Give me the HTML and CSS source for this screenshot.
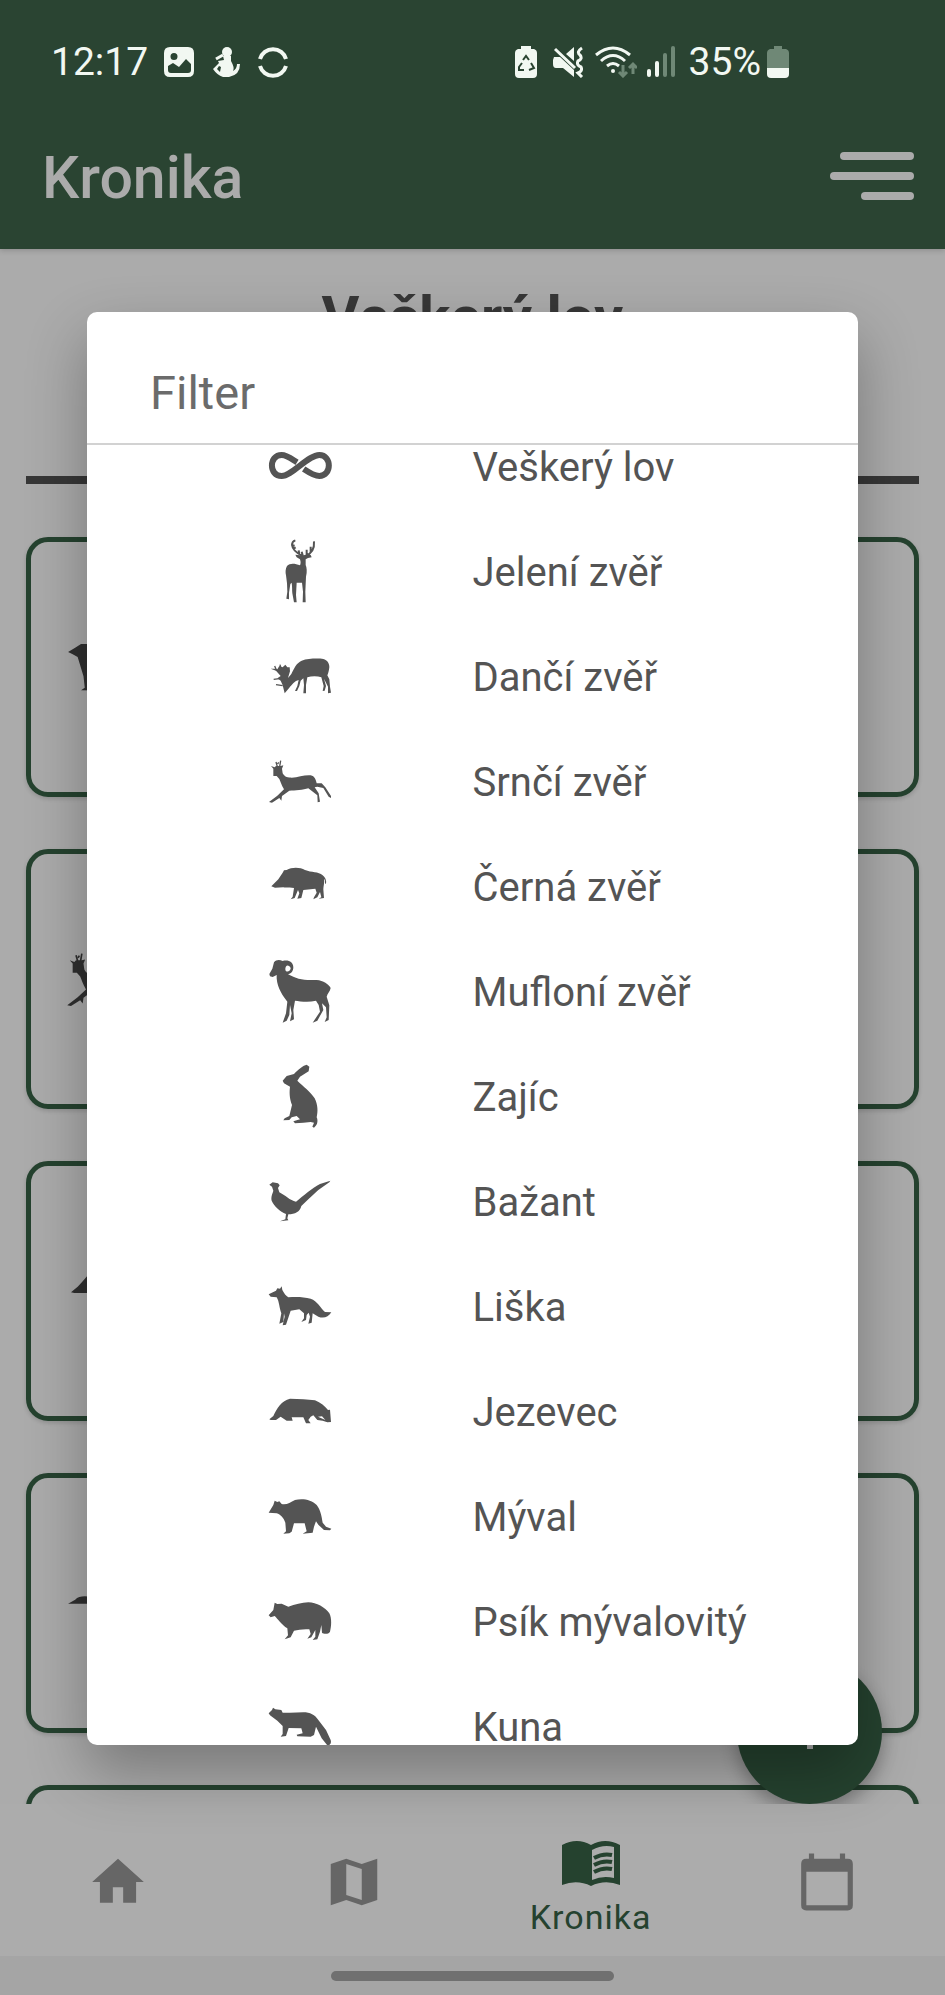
FILE: index.html
```html
<!DOCTYPE html>
<html lang="cs">
<head>
<meta charset="utf-8">
<meta name="viewport" content="width=device-width, initial-scale=1">
<title>Kronika</title>
<link rel="stylesheet" href="styles.css">
</head>
<body>
<svg class="sprite" aria-hidden="true">
  <symbol id="roe" viewBox="84 57 192 192"><path d="M100 116 93 108 104 112 108 108 122 108 130 106 126 116 128 130C134 142 145 143 155 143 175 142 195 134 212 136 224 138 228 150 230 160L245 160 256 172 273 198 273 204 266 200 250 174 232 170 224 172 236 190 240 215 233 217 232 196 205 175C190 180 165 182 148 182L126 198 124 212 118 204 96 218 87 216 112 197 132 178C124 165 122 155 118 147L110 138 100 138 100 130Z"/><path class="line" d="M112 110 108 96M119 110 122 92M113 102 116 97"/></symbol>
  <symbol id="boar" viewBox="84 372 192 192"><path d="M94 469 115 448 128 428 132 421 140 420C155 411 180 411 195 420 215 428 235 424 248 436 256 442 260 452 258 462L255 460C256 452 254 448 252 447 254 458 250 470 250 478L252 504 236 506 244 502 240 486 232 502 220 508 222 502 230 488 226 476 190 480 184 504 172 506 178 490 174 480 164 504 152 508 158 500 162 474C150 470 140 474 130 472L105 473Z"/></symbol>
</svg>
<div class="screen">
  <header class="top">
    <div class="status">
      <div class="status-group">
        <span>12:17</span>
        <svg width="30" height="30" viewBox="0 0 30 30"><path fill-rule="evenodd" d="M6 0H24Q30 0 30 6V24Q30 30 24 30H6Q0 30 0 24V6Q0 0 6 0ZM10 6A3.500 3.500 0 1 0 10 13A3.500 3.500 0 1 0 10 6ZM4 23V19L9 16 15 20 22 12 27 17V23Q27 26 24 26H7Q4 26 4 23Z"/></svg>
        <svg class="gap-wide" width="28" height="30" viewBox="0 0 28 30"><circle cx="15" cy="5" r="5"/><path d="M11 9H19L19 14Q23 21 21 24Q25 22 25 17H28Q28 28 17 30H11Q5 28 1 22L7 16 6 14 12 13ZM7 19 5 22 8 25 9 20Z" fill-rule="evenodd"/><path d="M4 12 11 8" stroke="currentColor" stroke-width="3"/></svg>
        <svg class="gap-wide" width="30" height="32" viewBox="0 0 30 32"><path class="line" d="M2 13A13.500 13.500 0 0 1 28 13M2 20A13.500 13.500 0 0 0 28 20"/></svg>
      </div>
      <div class="status-group">
        <svg width="24" height="32" viewBox="0 0 24 32"><path d="M7 0H17V3H20Q23 4 23 7V28Q23 32 19 32H5Q1 32 1 28V7Q1 4 4 3H7Z"/><path d="M9 14 12 10 15 14M17 17 20 22 15 24M10 24H5L5 21 8 17" fill="none" stroke="#2a4432" stroke-width="2"/></svg>
        <svg class="gap-mid" width="32" height="32" viewBox="0 0 32 32"><path d="M13 8 21 1V15ZM1 11H7L21 24V31L10 22H3Q0 22 0 18V14Z"/><path class="line thin" d="M2 3 22 22M29 2Q23 6 27 9 30 13 25 15 23 19 28 21 30 25 25 27L29 31"/></svg>
        <svg class="gap" width="42" height="32" viewBox="0 0 42 32"><path class="line thin" d="M1 9Q18-5 35 9M6 15Q18 4 30 15M12 20Q18 15 24 20"/><circle cx="18" cy="25" r="2"/><path class="line thin faint-line" d="M28 19V29M24 26 28 30 32 26M38 28V19M34 22 38 18 42 22"/></svg>
        <svg class="gap" width="28" height="32" viewBox="0 0 28 32"><rect y="23" width="4" height="8" rx="2"/><rect x="8" y="15" width="4" height="16" rx="2"/><g class="faint"><rect x="16" y="7" width="4" height="24" rx="2"/><rect x="24" width="4" height="31" rx="2"/></g></svg>
        <span class="percent">35%</span>
        <svg width="22" height="32" viewBox="0 0 22 32"><path class="faint" d="M7 0H15V3H19Q22 4 22 7V22H0V7Q0 4 3 3H7Z"/><path d="M0 22H22V28Q22 32 18 32H4Q0 32 0 28Z"/></svg>
      </div>
    </div>
    <div class="appbar">
      <h1>Kronika</h1>
      <button class="menu" aria-label="Menu"><i class="bar bar-mid"></i><i class="bar"></i><i class="bar bar-short"></i></button>
    </div>
  </header>

  <main class="content">
    <h2>Veškerý lov</h2>
    <hr>
    <div class="cards">
      <article class="card"><svg viewBox="0 0 192 192"><path d="M5 60 22 50 36 41H110V153L36 152 45 146 42 118 34 92 28 72 15 65Z"/></svg></article>
      <article class="card"><svg><use href="#roe"/></svg></article>
      <article class="card"><svg viewBox="0 0 192 192"><path d="M12 99 28 86 38 75 52 59H110V101H20Z"/></svg></article>
      <article class="card"><svg viewBox="0 0 192 192"><path d="M5 98 22 88C30 80 45 78 60 82L110 90V102L60 98Z"/></svg></article>
      <article class="card"></article>
    </div>
    <button class="fab" aria-label="Přidat"><svg width="34" height="34" viewBox="0 0 34 34"><path d="M14 0H20V14H34V20H20V34H14V20H0V14H14Z"/></svg></button>
  </main>

  <nav class="tabs">
    <a href="#" aria-label="Domů"><svg width="62" height="62" viewBox="0 0 24 24"><path d="M10 20V14H14V20H19V12H22L12 3 2 12H5V20Z"/></svg></a>
    <a href="#" aria-label="Mapa"><svg width="62" height="62" viewBox="0 0 24 24"><path fill-rule="evenodd" d="M3 5 9 3 15 5 21 3V19L15 21 9 19 3 21ZM9 5V17L15 19V7Z"/></svg></a>
    <a href="#" class="active"><svg width="58" height="46" viewBox="0 0 58 46"><path fill-rule="evenodd" d="M0 4Q15-4 29 4 43-4 58 4V44Q43 38 29 45 15 38 0 44ZM30 9V39Q41 34 52 37V6Q41 3 30 9Z"/><path class="line" d="M32 17Q41 12 50 14M32 24Q41 19 50 21M32 31Q41 26 50 28"/></svg><span>Kronika</span></a>
    <a href="#" aria-label="Kalendář"><svg width="62" height="62" viewBox="0 0 24 24"><path fill-rule="evenodd" d="M20 3H19V1H17V3H7V1H5V3H4Q2 3 2 5V21Q2 23 4 23H20Q22 23 22 21V5Q22 3 20 3ZM20 21H4V8H20Z"/></svg></a>
  </nav>
  <div class="system"><i></i></div>

  <div class="overlay">
    <section class="dialog" role="dialog" aria-labelledby="filter-title">
      <h2 id="filter-title">Filter</h2>
      <div class="viewport">
        <ul>
          <li><button><svg viewBox="84 12 192 192"><path d="M171 97C155 87 140 75 125 75 86 75 86 138 125 138 155 138 205 75 238 75 276 75 276 138 238 138 222 138 206 127 191 117" fill="none" stroke="currentColor" stroke-width="18"/></svg><span>Veškerý lov</span></button></li>
          <li><button><svg viewBox="84 327 192 192"><path d="M180 388C183 396 182 402 180 406 165 400 150 398 141 408 136 416 136 428 138 436L141 460 142 485 139 506 147 508 147 488 151 462 155 458C157 470 156 480 157 490L162 517H170L168 495 170 458H186L189 485 188 517H197L196 485 198 440C202 425 200 412 197 405V388L204 384 215 382 212 375H198L180 376 166 374 170 382Z"/><path class="line thick" d="M188 378C175 372 158 362 156 345 156 338 160 333 166 331M196 378C212 372 224 358 222 334M178 373 176 361M188 376 185 365M200 374V359M212 366 212 350M159 357 167 352M157 346 164 347"/></svg><span>Jelení zvěř</span></button></li>
          <li><button><svg viewBox="84 642 192 192"><path d="M134 790 128 766 122 752 112 745 122 738 108 722 92 716 108 716 112 718 118 708 128 712 136 704 142 712 149 712 150 724 144 744 154 732C162 715 170 698 185 692 205 685 235 685 250 687 262 690 268 700 268 712 267 722 264 732 262 736L268 748 270 770 273 788 264 790 264 770 252 746 258 768 254 782 248 783 251 768 244 742C232 738 215 738 202 742L198 765V790H190L192 765 190 745 182 752 178 768 171 783H165L172 768 176 750C165 752 155 765 148 773Z"/><path class="line" d="M101 748 118 746M108 764 128 767M104 708 110 722M122 712 120 704"/></svg><span>Dančí zvěř</span></button></li>
          <li><button><svg><use href="#roe"/></svg><span>Srnčí zvěř</span></button></li>
          <li><button><svg><use href="#boar"/></svg><span>Černá zvěř</span></button></li>
          <li><button><svg viewBox="84 687 192 192"><path fill-rule="evenodd" d="M90 739 88 732 97 716 102 697C108 689 118 688 128 693 145 688 160 696 160 712 160 724 152 732 144 733L160 740C180 750 205 750 230 750 250 752 266 762 272 774 270 785 262 790 260 800L268 826 266 870 254 876 260 862 258 832 246 820 250 840 232 872 218 878 240 845 236 825 228 812C205 818 180 814 165 812L160 840 162 868 150 874 155 850 150 825 148 855 140 872 128 878 138 850 142 815C130 800 112 775 110 745V735L98 741ZM145 707C138 705 134 715 137 722 143 728 150 722 152 716 152 711 149 708 145 707Z"/></svg><span>Mufloní zvěř</span></button></li>
          <li><button><svg viewBox="84 102 192 192"><path d="M128 152 140 138 162 132C175 118 190 106 200 104L208 110 206 124 180 140 172 152C190 170 212 185 224 205 234 225 234 245 230 262 236 275 230 288 222 293L217 290 222 278 212 276 190 278 165 280 160 274 180 268 170 258 155 262 148 270 130 271 134 265 148 258 156 225C148 205 148 185 150 170L132 160Z"/></svg><span>Zajíc</span></button></li>
          <li><button><svg viewBox="84 417 192 192"><path d="M88 464 98 457 114 460 119 466 114 474 118 487C135 495 150 512 168 515 190 498 215 475 240 462L271 452 268 457 235 480 205 508 184 528C180 545 165 553 145 553L142 565 145 571 120 574 136 568 138 552C120 545 102 528 95 512 92 500 98 490 100 482L96 470Z"/></svg><span>Bažant</span></button></li>
          <li><button><svg viewBox="84 732 192 192"><path d="M86 793 108 782 112 775 120 776 125 769 127 780C132 790 138 798 145 802 165 800 190 800 212 806 232 812 242 835 255 846L274 847C265 862 250 866 235 860L218 850 215 878 205 881 210 860 206 848 200 855 198 870 184 876 192 865 192 850 178 838 152 842 146 860 138 884 128 886 134 860 132 850 130 876 118 881 124 850C118 835 118 815 110 802L92 800Z"/></svg><span>Liška</span></button></li>
          <li><button><svg viewBox="84 147 192 192"><path fill-rule="evenodd" d="M88 268 100 258C110 235 125 212 150 206L190 208 225 211C242 217 255 230 264 240L270 239 273 276 262 277 248 272 232 270 220 256 212 260 205 270 212 280 198 280 190 262H155L158 272 140 272 122 260 108 270 92 270ZM234 260 246 259 256 270Z"/></svg><span>Jezevec</span></button></li>
          <li><button><svg viewBox="84 12 192 192"><path d="M86 98 100 75 104 62 112 66 118 64 125 72C140 75 150 68 165 60 185 54 215 58 230 75 242 90 245 110 248 128L258 140 274 146 270 151 252 150 235 134 228 124 222 140 218 158 188 161 200 154 194 130 162 130 155 155 148 160 130 161 138 154 136 128C130 112 122 104 110 100Z"/></svg><span>Mýval</span></button></li>
          <li><button><svg viewBox="84 327 192 192"><path d="M86 406 100 390 104 368 112 372 125 371 145 380C165 374 185 368 205 367 230 368 255 382 268 400 276 415 274 440 270 455 265 464 250 462 246 458L244 435 240 455 232 478 218 480 226 470 226 450 214 472 202 476 212 462 208 448C190 446 175 450 162 452L152 472 134 478 144 466 142 445C125 435 112 415 104 408L92 412Z"/></svg><span>Psík mývalovitý</span></button></li>
          <li><button><svg viewBox="84 642 192 192"><path d="M86 700 96 690 99 683 106 688 124 690 128 698 150 698 190 697C210 697 225 705 235 720L258 750 272 780C275 790 270 797 262 796L245 775 228 740 222 765 212 770 172 769 170 764 188 760 184 745 146 744 138 768 122 770 128 762 128 738 112 722 90 706Z"/></svg><span>Kuna</span></button></li>
        </ul>
      </div>
    </section>
  </div>
</div>
</body>
</html>
```

FILE: styles.css
```css
* {
  box-sizing: border-box;
}

body,
h1,
h2,
ul {
  margin: 0;
  padding: 0;
}

body {
  font-family: Roboto, "Noto Sans", sans-serif;
  background: #ababab;
}

button {
  border: 0;
  padding: 0;
  background: none;
  font: inherit;
  color: inherit;
}

svg {
  display: block;
  fill: currentColor;
  flex: none;
}

.sprite {
  position: absolute;
  width: 0;
  height: 0;
}

.line {
  fill: none;
  stroke: currentColor;
  stroke-width: 4;
}

.thin {
  stroke-width: 3;
}

.thick {
  stroke-width: 6;
}

.screen {
  position: relative;
  display: flex;
  flex-direction: column;
  height: 100vh;
  overflow: hidden;
}

/* Header */
.top {
  position: relative;
  background: #2a4432;
  padding-bottom: 18px;
  box-shadow: 0 2px 5px rgba(0, 0, 0, 0.15);
}

.status {
  display: flex;
  justify-content: space-between;
  align-items: center;
  height: 124px;
  padding: 0 156px 0 51px;
  font-size: 39px;
  color: #f2f8f2;
}

.status-group {
  display: flex;
  align-items: center;
}

.status-group span {
  margin-right: 16px;
}

.status-group .percent {
  margin: 0 6px 0 14px;
}

.gap {
  margin-left: 10px;
}

.gap-mid {
  margin-left: 15px;
}

.gap-wide {
  margin-left: 18px;
}

.faint {
  fill: #6f8876;
}

.faint-line {
  stroke: #6f8876;
}

.appbar {
  display: flex;
  justify-content: space-between;
  align-items: center;
  height: 107px;
  padding: 0 31px 0 42px;
  color: #ababab;
}

.appbar h1 {
  font-size: 59px;
  font-weight: 500;
}

.menu {
  display: flex;
  flex-direction: column;
  align-items: flex-end;
  gap: 12px;
  width: 84px;
  padding-bottom: 4px;
}

.bar {
  width: 84px;
  height: 8px;
  border-radius: 4px;
  background: #ababab;
}

.bar-mid {
  width: 74px;
}

.bar-short {
  width: 53px;
}

/* Records */
.content {
  position: relative;
  flex: 1;
  min-height: 0;
  overflow: hidden;
  padding: 34px 26px 0;
}

.content h2 {
  font-size: 58px;
  line-height: 68px;
  text-align: center;
  color: #373737;
}

.content hr {
  height: 8px;
  margin: 125px 0 53px;
  border: 0;
  background: #373737;
}

.cards {
  display: flex;
  flex-direction: column;
  gap: 52px;
}

.card {
  display: flex;
  align-items: center;
  height: 260px;
  padding-left: 35px;
  border: 5px solid #25422f;
  border-radius: 22px;
  color: #2f2f2f;
  box-shadow: 0 2px 4px rgba(0, 0, 0, 0.15);
}

.card svg {
  width: 80px;
  height: 80px;
}

.fab {
  position: absolute;
  right: 63px;
  bottom: 0;
  display: grid;
  place-items: center;
  width: 145px;
  height: 145px;
  border-radius: 50%;
  background: #25422f;
  color: #ababab;
  box-shadow: 0 8px 18px rgba(0, 0, 0, 0.3);
}

/* Bottom navigation */
.tabs {
  display: grid;
  grid-template-columns: repeat(4, 1fr);
  height: 152px;
  padding-top: 4px;
  background: #acacac;
}

.tabs a {
  display: flex;
  flex-direction: column;
  align-items: center;
  justify-content: center;
  gap: 10px;
  color: #666;
  font-size: 34px;
  line-height: 40px;
  text-decoration: none;
}

.tabs .active {
  padding-top: 14px;
  color: #25422f;
}

.tabs .active span {
  letter-spacing: 1px;
}

.system {
  display: grid;
  place-items: center;
  height: 39px;
  background: #a5a5a5;
}

.system i {
  width: 30%;
  height: 10px;
  border-radius: 5px;
  background: #707070;
}

/* Filter dialog */
.overlay {
  position: absolute;
  inset: 0;
  display: flex;
  padding: 312px 87px 250px;
}

.dialog {
  display: flex;
  flex-direction: column;
  flex: 1;
  overflow: hidden;
  border-radius: 10px;
  background: #fff;
  box-shadow: 0 26px 60px rgba(0, 0, 0, 0.3);
}

.dialog h2 {
  padding: 53px 63px 23px;
  border-bottom: 2px solid #d2d2d2;
  font-size: 47px;
  font-weight: 400;
  line-height: 55px;
  color: #6b6b6b;
}

.viewport {
  flex: 1;
  min-height: 0;
  overflow: hidden;
}

.viewport ul {
  margin-top: -30px;
  list-style: none;
}

.viewport button {
  display: grid;
  grid-template-columns: 1fr 1fr;
  align-items: center;
  width: 100%;
  height: 105px;
  font-size: 40px;
  text-align: left;
  color: #545454;
}

.viewport svg {
  justify-self: center;
  width: 64px;
  height: 64px;
  margin: 0 0 4px 40px;
}
```
